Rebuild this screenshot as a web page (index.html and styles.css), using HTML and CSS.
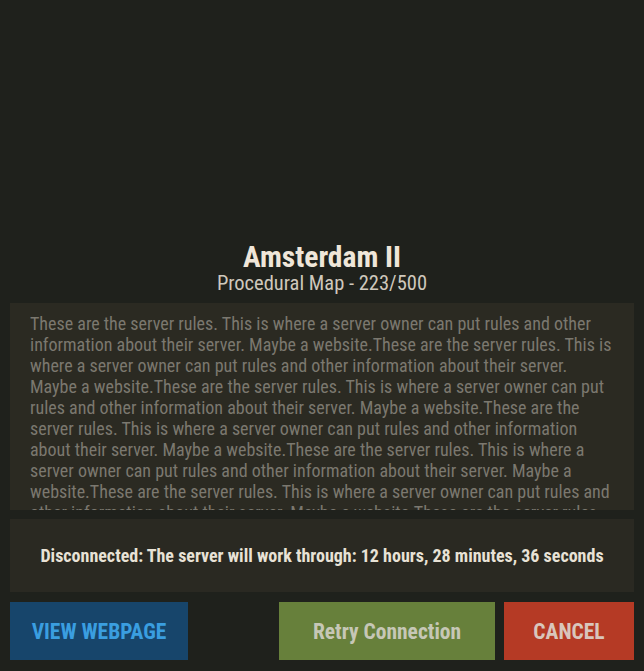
FILE: index.html
```html
<!DOCTYPE html>
<html>
<head>
<meta charset="utf-8">
<link rel="stylesheet" href="styles.css">
</head>
<body>
<div class="screen">
  <div class="header">
    <div class="title">Amsterdam II</div>
    <div class="subtitle">Procedural Map - 223/500</div>
  </div>
  <div class="rules">
    <p>These are the server rules. This is where a server owner can put rules and other information about their server. Maybe a website.These are the server rules. This is where a server owner can put rules and other information about their server. Maybe a website.These are the server rules. This is where a server owner can put rules and other information about their server. Maybe a website.These are the server rules. This is where a server owner can put rules and other information about their server. Maybe a website.These are the server rules. This is where a server owner can put rules and other information about their server. Maybe a website.These are the server rules. This is where a server owner can put rules and other information about their server. Maybe a website.These are the server rules. This is where a server owner can put rules and other information about their server. Maybe a website.</p>
  </div>
  <div class="status">Disconnected: The server will work through: 12 hours, 28 minutes, 36 seconds</div>
  <div class="actions">
    <button class="btn btn-web">VIEW WEBPAGE</button>
    <div class="spacer"></div>
    <button class="btn btn-retry">Retry Connection</button>
    <button class="btn btn-cancel">CANCEL</button>
  </div>
</div>
</body>
</html>
```
FILE: styles.css
```css
html, body {
  margin: 0;
  padding: 0;
  background: #1f211c;
}
body {
  font-family: "Roboto", "Liberation Sans Narrow", sans-serif;
  font-stretch: 75%;
}
.screen {
  height: 671px;
  box-sizing: border-box;
  display: flex;
  flex-direction: column;
  justify-content: flex-end;
  padding: 0 10px 11px 10px;
}
.header {
  text-align: center;
  margin-bottom: 9px;
}
.title {
  font-size: 29.5px;
  font-weight: 700;
  line-height: 30px;
  color: #efe6d9;
}
.subtitle {
  font-size: 20.5px;
  line-height: 22px;
  color: #cfc8bc;
}
.rules {
  height: 207px;
  background: #2b2a22;
  overflow: hidden;
  padding: 10px 20px 0 20px;
  box-sizing: border-box;
}
.rules p {
  margin: 0;
  height: 100%;
  overflow: hidden;
  font-size: 18px;
  line-height: 21px;
  color: #7b786f;
}
.status {
  margin-top: 9px;
  height: 73px;
  background: #2a2922;
  display: flex;
  align-items: center;
  justify-content: center;
  font-size: 18px;
  font-weight: 700;
  color: #e8e2d6;
}
.actions {
  margin-top: 10px;
  height: 58px;
  display: flex;
  gap: 9px;
}
.spacer {
  flex: 1;
}
.btn {
  border: 0;
  margin: 0;
  padding: 0;
  font-family: inherit;
  font-stretch: 75%;
  font-weight: 700;
  font-size: 21.5px;
  height: 58px;
}
.btn-web {
  width: 178px;
  background: #17456b;
  color: #3a9ee0;
}
.btn-retry {
  width: 216px;
  background: #67803b;
  color: #c6c7b6;
}
.btn-cancel {
  width: 130px;
  background: #b53a25;
  color: #d9c6bc;
}
```
